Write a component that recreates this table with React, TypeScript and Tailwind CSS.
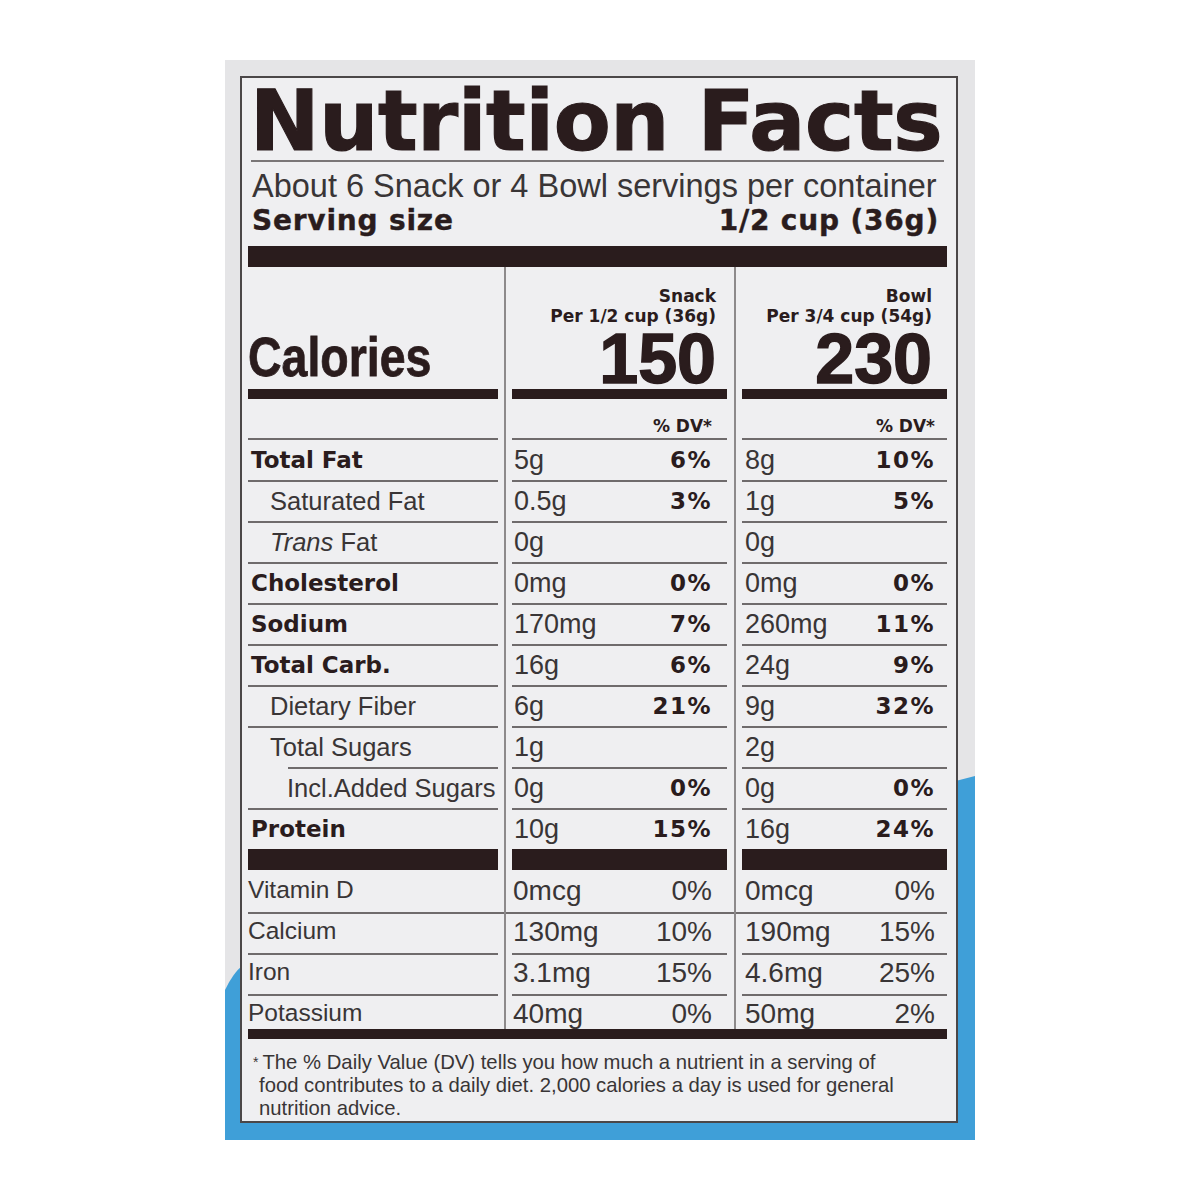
import React from 'react';

type Row = {
    label: string;
    kind: 'main' | 'sub' | 'trans' | 'added';
    snack: [string, string];
    bowl: [string, string];
    line: 'full' | 'indent' | 'none';
    h: string;
};

const rows: Row[] = [
    { label: 'Total Fat', kind: 'main', snack: ['5g', '6%'], bowl: ['8g', '10%'], line: 'full', h: 'h-[41px]' },
    { label: 'Saturated Fat', kind: 'sub', snack: ['0.5g', '3%'], bowl: ['1g', '5%'], line: 'full', h: 'h-[41px]' },
    { label: 'Fat', kind: 'trans', snack: ['0g', ''], bowl: ['0g', ''], line: 'full', h: 'h-[41px]' },
    { label: 'Cholesterol', kind: 'main', snack: ['0mg', '0%'], bowl: ['0mg', '0%'], line: 'full', h: 'h-[41px]' },
    { label: 'Sodium', kind: 'main', snack: ['170mg', '7%'], bowl: ['260mg', '11%'], line: 'full', h: 'h-[41px]' },
    { label: 'Total Carb.', kind: 'main', snack: ['16g', '6%'], bowl: ['24g', '9%'], line: 'full', h: 'h-[41px]' },
    { label: 'Dietary Fiber', kind: 'sub', snack: ['6g', '21%'], bowl: ['9g', '32%'], line: 'full', h: 'h-[41px]' },
    { label: 'Total Sugars', kind: 'sub', snack: ['1g', ''], bowl: ['2g', ''], line: 'indent', h: 'h-[41px]' },
    { label: 'Incl.Added Sugars', kind: 'added', snack: ['0g', '0%'], bowl: ['0g', '0%'], line: 'full', h: 'h-[41px]' },
    { label: 'Protein', kind: 'main', snack: ['10g', '15%'], bowl: ['16g', '24%'], line: 'none', h: 'h-[40px]' },
];

const vitamins = [
    { label: 'Vitamin D', snack: ['0mcg', '0%'], bowl: ['0mcg', '0%'], h: 'h-[41px]', line: true },
    { label: 'Calcium', snack: ['130mg', '10%'], bowl: ['190mg', '15%'], h: 'h-[41px]', line: true },
    { label: 'Iron', snack: ['3.1mg', '15%'], bowl: ['4.6mg', '25%'], h: 'h-[41px]', line: true },
    { label: 'Potassium', snack: ['40mg', '0%'], bowl: ['50mg', '2%'], h: 'h-[36px]', line: false },
];

const heavy = "font-['DejaVu_Sans',sans-serif] font-bold text-[#2a1c1d]";
const plain = "font-['Liberation_Sans',Arial,sans-serif] text-[#393536]";
const grid = 'grid grid-cols-[250px_14px_215px_15px_205px]';

const Sep = () => (
    <div className="flex justify-center">
        <div className="w-[2px] bg-[#8d8a8b]" />
    </div>
);

const Line = ({ indent }: { indent?: boolean }) => (
    <div className={`h-[2px] bg-[#6f6b6c] ${indent ? 'ml-[40px]' : ''}`} />
);

const Bar = ({ h }: { h: string }) => <div className={`${h} bg-[#2a1c1d]`} />;

const NutrientRow = ({ r }: { r: Row }) => {
    const labelCls =
        r.kind === 'main'
            ? `${heavy} text-[23px] pl-[3px]`
            : r.kind === 'added'
              ? `${plain} text-[25.5px] pl-[39px]`
              : `${plain} text-[25.5px] pl-[22px]`;
    const cell = (v: [string, string], pr: string, pl: string) => (
        <div className="flex flex-col">
            <div className={`flex-1 flex items-center justify-between ${pl} ${pr}`}>
                <span className={`${plain} text-[27px]`}>{v[0]}</span>
                <span className={`${heavy} text-[23px] tracking-[1.5px]`}>{v[1]}</span>
            </div>
            {r.line !== 'none' && <Line />}
        </div>
    );
    return (
        <div className={`${grid} ${r.h}`}>
            <div className="flex flex-col">
                <div className={`flex-1 flex items-center ${labelCls}`}>
                    {r.kind === 'trans' ? (
                        <span>
                            <span className="italic">Trans</span> Fat
                        </span>
                    ) : (
                        r.label
                    )}
                </div>
                {r.line !== 'none' && <Line indent={r.line === 'indent'} />}
            </div>
            <Sep />
            {cell(r.snack, 'pr-[15px]', 'pl-[2px]')}
            <Sep />
            {cell(r.bowl, 'pr-[12px]', 'pl-[3px]')}
        </div>
    );
};

export default function App() {
    return (
        <div className="min-h-[1200px] bg-white flex justify-center pt-[60px]">
            <div className="relative w-[750px] h-[1080px] bg-[#e5e5e7] overflow-hidden">
                <svg className="absolute inset-0" width="750" height="1080" viewBox="0 0 750 1080">
                    <path d="M0 930 Q8 913 18 905 L750 716 V1080 H0 Z" fill="#3f9fd8" />
                </svg>
                <div className="relative ml-[15px] mt-[16px] w-[718px] h-[1047px] border-2 border-[#4b4748] bg-[#efeff1] pl-[6px] pr-[9px] flex flex-col">
                    <div className={`${heavy} text-[83px] leading-none tracking-[-0.3px] pl-[2px] pt-[2px] h-[82px] whitespace-nowrap [-webkit-text-stroke:1.2px_#2a1c1d]`}>
                        Nutrition Facts
                    </div>
                    <div className="h-[2px] bg-[#7a7677] mx-[3px]" />
                    <div className={`${plain} text-[32.5px] leading-none mt-[8px] pl-[4px] whitespace-nowrap`}>
                        About 6 Snack or 4 Bowl servings per container
                    </div>
                    <div className={`${heavy} text-[28px] leading-none tracking-[0.8px] mt-[4px] flex justify-between pl-[4px] pr-[8px] [-webkit-text-stroke:0.4px_#2a1c1d]`}>
                        <span>Serving size</span>
                        <span>1/2 cup (36g)</span>
                    </div>
                    <div className="mt-[11px]">
                        <Bar h="h-[21px]" />
                    </div>

                    {/* header */}
                    <div className={`${grid} h-[122px]`}>
                        <div className="flex items-end pb-[4px]">
                            <span className="inline-block origin-left scale-x-[0.83] font-['Liberation_Sans',Arial,sans-serif] font-bold text-[56px] leading-none text-[#2a1c1d] [-webkit-text-stroke:0.8px_#2a1c1d]">
                                Calories
                            </span>
                        </div>
                        <Sep />
                        <div className="flex flex-col items-end pt-[19px] pr-[11px]">
                            <span className={`${heavy} text-[17px] leading-[20px]`}>Snack</span>
                            <span className={`${heavy} text-[17px] leading-[20px]`}>Per 1/2 cup (36g)</span>
                            <span className="mt-auto font-['Liberation_Sans',Arial,sans-serif] font-bold text-[70px] leading-[60px] text-[#2a1c1d] [-webkit-text-stroke:1.5px_#2a1c1d]">
                                150
                            </span>
                        </div>
                        <Sep />
                        <div className="flex flex-col items-end pt-[19px] pr-[15px]">
                            <span className={`${heavy} text-[17px] leading-[20px]`}>Bowl</span>
                            <span className={`${heavy} text-[17px] leading-[20px]`}>Per 3/4 cup (54g)</span>
                            <span className="mt-auto font-['Liberation_Sans',Arial,sans-serif] font-bold text-[70px] leading-[60px] text-[#2a1c1d] [-webkit-text-stroke:1.5px_#2a1c1d]">
                                230
                            </span>
                        </div>
                    </div>

                    {/* calorie bars */}
                    <div className={`${grid} h-[10px]`}>
                        <Bar h="h-[10px]" />
                        <Sep />
                        <Bar h="h-[10px]" />
                        <Sep />
                        <Bar h="h-[10px]" />
                    </div>

                    {/* % DV row */}
                    <div className={`${grid} h-[41px]`}>
                        <div className="flex flex-col">
                            <div className="flex-1" />
                            <Line />
                        </div>
                        <Sep />
                        <div className="flex flex-col">
                            <div className={`flex-1 flex items-end justify-end pr-[15px] pb-[3px] ${heavy} text-[17px] leading-none`}>
                                % DV*
                            </div>
                            <Line />
                        </div>
                        <Sep />
                        <div className="flex flex-col">
                            <div className={`flex-1 flex items-end justify-end pr-[12px] pb-[3px] ${heavy} text-[17px] leading-none`}>
                                % DV*
                            </div>
                            <Line />
                        </div>
                    </div>

                    {rows.map((r) => (
                        <NutrientRow key={r.label} r={r} />
                    ))}

                    <div className={`${grid} h-[21px]`}>
                        <Bar h="h-[21px]" />
                        <Sep />
                        <Bar h="h-[21px]" />
                        <Sep />
                        <Bar h="h-[21px]" />
                    </div>

                    {vitamins.map((v, i) => (
                        <div key={v.label} className={`${grid} ${v.h}`}>
                            <div className="flex flex-col">
                                <div className={`flex-1 flex items-center ${plain} text-[24.5px]`}>{v.label}</div>
                                {v.line && <Line />}
                            </div>
                            <div className="flex flex-col">
                                <div className="flex-1 flex justify-center">
                                    <div className="w-[2px] bg-[#8d8a8b]" />
                                </div>
                                {i === 0 && <Line />}
                            </div>
                            <div className="flex flex-col">
                                <div className={`flex-1 flex items-center justify-between pl-[1px] pr-[15px] ${plain} text-[28px]`}>
                                    <span>{v.snack[0]}</span>
                                    <span>{v.snack[1]}</span>
                                </div>
                                {v.line && <Line />}
                            </div>
                            <div className="flex flex-col">
                                <div className="flex-1 flex justify-center">
                                    <div className="w-[2px] bg-[#8d8a8b]" />
                                </div>
                                {i === 0 && <Line />}
                            </div>
                            <div className="flex flex-col">
                                <div className={`flex-1 flex items-center justify-between pl-[3px] pr-[12px] ${plain} text-[28px]`}>
                                    <span>{v.bowl[0]}</span>
                                    <span>{v.bowl[1]}</span>
                                </div>
                                {v.line && <Line />}
                            </div>
                        </div>
                    ))}

                    <Bar h="h-[10px]" />

                    <div className={`${plain} text-[20.3px] leading-[23px] pt-[12px] pl-[11px] whitespace-nowrap`}>
                        <span className="-ml-[6px] mr-[4px] text-[14px] align-top">*</span>
                        The % Daily Value (DV) tells you how much a nutrient in a serving of
                        <br />
                        food contributes to a daily diet. 2,000 calories a day is used for general
                        <br />
                        nutrition advice.
                    </div>
                </div>
            </div>
        </div>
    );
}
